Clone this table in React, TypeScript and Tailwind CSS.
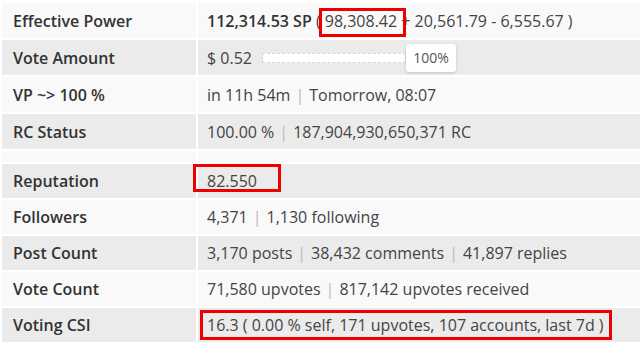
import React from "react";

const Sep = () => <span className="mx-[5px] text-[#bbbbbb]">|</span>;

type RowProps = { label: string; children?: React.ReactNode; alt?: boolean; h: string };

function Row({ label, children, alt, h }: RowProps) {
  const bg = alt ? "bg-[#ebebeb]" : "bg-[#f9f9f9]";
  return (
    <div className={`flex gap-[2px] ${h}`}>
      <div className={`w-[194px] shrink-0 ${bg} flex items-center pl-[11px] font-semibold text-[#333333]`}>
        {label}
      </div>
      <div className={`flex-1 ${bg} flex items-center pl-[9px] text-[#444444] whitespace-nowrap`}>
        {children}
      </div>
    </div>
  );
}

export default function App() {
  return (
    <div
      className="relative w-[640px] h-[342px] overflow-hidden bg-white text-[16px] leading-none [font-variant-ligatures:none]"
      style={{ fontFamily: '"Open Sans", "Noto Sans", sans-serif' }}
    >
      <div className="flex flex-col gap-[2px] pt-[3px] pl-[2px]">
        <Row label="Effective Power" h="h-[35px]">
          <span className="font-semibold text-[#333333]">112,314.53 SP</span>
          <span>&nbsp;( 98,308.42 + 20,561.79 - 6,555.67 )</span>
        </Row>
        <Row label="Vote Amount" alt h="h-[35px]">
          <span>$ 0.52</span>
          <div className="ml-[10px] w-[144px] h-[10px] border border-dashed border-[#d6d6d6] bg-white" />
          <div className="w-[50px] h-[28px] rounded-[3px] bg-white shadow-[0_1px_3px_rgba(0,0,0,0.18)] flex items-center justify-center text-[14px] text-[#555555]">
            100%
          </div>
        </Row>
        <Row label="VP ~> 100 %" h="h-[35px]">
          <span>in 11h 54m</span>
          <Sep />
          <span>Tomorrow, 08:07</span>
        </Row>
        <Row label="RC Status" alt h="h-[35px]">
          <span>100.00 %</span>
          <Sep />
          <span>187,904,930,650,371 RC</span>
        </Row>
        <div className="flex gap-[2px] h-[11px]">
          <div className="w-[194px] shrink-0 bg-[#f9f9f9]" />
          <div className="flex-1 bg-[#f9f9f9]" />
        </div>
        <Row label="Reputation" alt h="h-[34px]">
          <span>82.550</span>
        </Row>
        <Row label="Followers" h="h-[34px]">
          <span>4,371</span>
          <Sep />
          <span>1,130 following</span>
        </Row>
        <Row label="Post Count" alt h="h-[34px]">
          <span>3,170 posts</span>
          <Sep />
          <span>38,432 comments</span>
          <Sep />
          <span>41,897 replies</span>
        </Row>
        <Row label="Vote Count" h="h-[34px]">
          <span>71,580 upvotes</span>
          <Sep />
          <span>817,142 upvotes received</span>
        </Row>
        <Row label="Voting CSI" alt h="h-[34px]">
          <span>16.3 ( 0.00 % self, 171 upvotes, 107 accounts, last 7d )</span>
        </Row>
      </div>

      {/* annotation boxes */}
      <div className="absolute left-[319px] top-[8px] w-[87px] h-[29px] border-[3px] border-[#ee0000]" />
      <div className="absolute left-[193px] top-[164px] w-[88px] h-[28px] border-[3px] border-[#ee0000]" />
      <div className="absolute left-[200px] top-[310px] w-[412px] h-[30px] border-[3px] border-[#ee0000]" />
    </div>
  );
}
